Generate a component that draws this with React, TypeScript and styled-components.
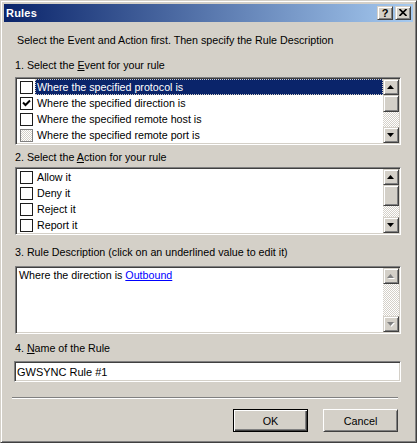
import React from 'react';
import styled, { createGlobalStyle, css } from 'styled-components';

const GlobalStyle = createGlobalStyle`
  html, body {
    margin: 0;
    padding: 0;
    background: #d4d0c8;
  }
  * {
    box-sizing: border-box;
  }
`;

const FONT = `"Liberation Sans", Arial, sans-serif`;

// classic 3D edges
const raised = css`
  border: 1px solid;
  border-color: #d4d0c8 #404040 #404040 #d4d0c8;
  box-shadow: inset 1px 1px #fff, inset -1px -1px #808080;
  background: #d4d0c8;
`;

const sunken = css`
  border: 1px solid;
  border-color: #808080 #fff #fff #808080;
  box-shadow: inset 1px 1px #404040, inset -1px -1px #d4d0c8;
  background: #fff;
`;

const checker = css`
  background-color: #fff;
  background-image: conic-gradient(#d4d0c8 25%, #fff 0 50%, #d4d0c8 0 75%, #fff 0);
  background-size: 2px 2px;
`;

const Window = styled.div`
  width: 417px;
  height: 443px;
  display: flex;
  flex-direction: column;
  padding: 3px;
  background: #d4d0c8;
  border: 1px solid;
  border-color: #d4d0c8 #404040 #404040 #d4d0c8;
  box-shadow: inset 1px 1px #fff, inset -1px -1px #808080;
  font-family: ${FONT};
  font-size: 10.7px;
  color: #000;
`;

const TitleBar = styled.div`
  height: 18px;
  display: flex;
  align-items: center;
  padding: 0 2px 0 2px;
  background: linear-gradient(to right, #0a246a, #a6caf0);
`;

const TitleText = styled.span`
  color: #fff;
  font-weight: bold;
  font-size: 11px;
  letter-spacing: 0.2px;
`;

const TitleButtons = styled.div`
  margin-left: auto;
  display: flex;
  gap: 2px;
`;

const TitleButton = styled.div`
  ${raised};
  width: 16px;
  height: 14px;
  display: flex;
  align-items: center;
  justify-content: center;
  font-weight: bold;
  font-size: 11px;
  line-height: 12px;
  padding-bottom: 1px;
`;

const Body = styled.div`
  flex: 1;
  display: flex;
  flex-direction: column;
  padding: 0 12px 0 11px;
`;

const Caption = styled.div<{ $top: number; $indent?: number }>`
  margin-top: ${(p) => p.$top}px;
  padding-left: ${(p) => p.$indent ?? 0}px;
  height: 13px;
  line-height: 13px;
  white-space: nowrap;
`;

const ListBox = styled.div<{ $top: number }>`
  ${sunken};
  margin-top: ${(p) => p.$top}px;
  height: 68px;
  padding: 1px;
  display: flex;
  overflow: hidden;
`;

const Rows = styled.div`
  flex: 1;
  overflow: hidden;
`;

const Row = styled.div`
  height: 16px;
  display: flex;
  align-items: center;
`;

const CheckBox = styled.div<{ $dim?: boolean }>`
  width: 13px;
  height: 13px;
  margin-left: 3px;
  display: flex;
  align-items: center;
  justify-content: center;
  border: 1px solid ${(p) => (p.$dim ? '#808080' : '#1c1c1c')};
  ${(p) => (p.$dim ? checker : 'background: #fff;')}
`;

const RowLabel = styled.span<{ $selected?: boolean }>`
  flex: 1;
  height: 16px;
  line-height: 16px;
  margin-left: 2px;
  padding-left: 2px;
  white-space: nowrap;
  ${(p) =>
    p.$selected &&
    css`
      background: #0a246a;
      color: #fff;
      outline: 1px dotted #d4d0c8;
      outline-offset: -1px;
    `}
`;

const DescText = styled.div`
  flex: 1;
  padding: 1px 0 0 2px;
  line-height: 13px;
  white-space: nowrap;
`;

const Link = styled.span`
  color: #0000ff;
  text-decoration: underline;
`;

const ScrollBar = styled.div`
  ${checker};
  width: 16px;
  display: flex;
  flex-direction: column;
`;

const ScrollButton = styled.div`
  ${raised};
  width: 16px;
  height: 16px;
  display: flex;
  align-items: center;
  justify-content: center;
`;

const Thumb = styled.div<{ $size: number }>`
  ${raised};
  width: 16px;
  height: ${(p) => p.$size}px;
`;

const Track = styled.div`
  flex: 1;
`;

const NameInput = styled.input`
  ${sunken};
  margin-top: 6px;
  margin-left: -1px;
  height: 21px;
  padding: 0 2px;
  font-family: ${FONT};
  font-size: 11px;
  color: #000;
  outline: none;
`;

const Separator = styled.div`
  margin: 15px 3px 0 -3px;
  height: 2px;
  border-top: 1px solid #808080;
  border-bottom: 1px solid #fff;
`;

const ButtonRow = styled.div`
  display: flex;
  justify-content: flex-end;
  gap: 15px;
  margin-top: 10px;
  padding-right: 3px;
`;

const PushButton = styled.button<{ $default?: boolean }>`
  width: 75px;
  height: 23px;
  padding: 0;
  background: #d4d0c8;
  font-family: ${FONT};
  font-size: 10.8px;
  color: #000;
  border: 1px solid;
  ${(p) =>
    p.$default
      ? css`
          border-color: #000;
          box-shadow: inset 1px 1px #fff, inset -1px -1px #404040, inset -2px -2px #808080;
        `
      : css`
          border-color: #fff #404040 #404040 #fff;
          box-shadow: inset 1px 1px #d4d0c8, inset -1px -1px #808080;
        `}
`;

const Arrow: React.FC<{ down?: boolean; disabled?: boolean }> = ({ down, disabled }) => {
  const pts = down ? '0,0 7,0 3.5,4' : '0,4 7,4 3.5,0';
  return (
    <svg width="8" height="5" viewBox="0 0 8 5">
      {disabled && <polygon points={pts} fill="#fff" transform="translate(1,1)" />}
      <polygon points={pts} fill={disabled ? '#808080' : '#000'} />
    </svg>
  );
};

const CheckMark = () => (
  <svg width="9" height="9" viewBox="0 0 9 9">
    <path d="M1 3.5 L3.5 6 L8 1.5" stroke="#000" strokeWidth="2" fill="none" />
  </svg>
);

const Scroll: React.FC<{ thumb?: number; disabled?: boolean }> = ({ thumb, disabled }) => (
  <ScrollBar>
    <ScrollButton>
      <Arrow disabled={disabled} />
    </ScrollButton>
    {thumb ? <Thumb $size={thumb} /> : null}
    <Track />
    <ScrollButton>
      <Arrow down disabled={disabled} />
    </ScrollButton>
  </ScrollBar>
);

const events = [
  { label: 'Where the specified protocol is', checked: false, selected: true },
  { label: 'Where the specified direction is', checked: true },
  { label: 'Where the specified remote host is', checked: false },
  { label: 'Where the specified remote port is', checked: false, dim: true },
];

const actions = ['Allow it', 'Deny it', 'Reject it', 'Report it'];

const App: React.FC = () => {
  return (
    <>
      <GlobalStyle />
      <Window>
        <TitleBar>
          <TitleText>Rules</TitleText>
          <TitleButtons>
            <TitleButton>?</TitleButton>
            <TitleButton>
              <svg width="8" height="7" viewBox="0 0 8 7">
                <path d="M0.5 0 L7.5 7 M7.5 0 L0.5 7" stroke="#000" strokeWidth="1.6" />
              </svg>
            </TitleButton>
          </TitleButtons>
        </TitleBar>

        <Body>
          <Caption $top={12} $indent={2}>
            Select the Event and Action first. Then specify the Rule Description
          </Caption>

          <Caption $top={12}>
            1. Select the <u>E</u>vent for your rule
          </Caption>
          <ListBox $top={5}>
            <Rows>
              {events.map((e) => (
                <Row key={e.label}>
                  <CheckBox $dim={e.dim}>{e.checked && <CheckMark />}</CheckBox>
                  <RowLabel $selected={e.selected}>{e.label}</RowLabel>
                </Row>
              ))}
            </Rows>
            <Scroll thumb={17} />
          </ListBox>

          <Caption $top={6}>
            2. Select the <u>A</u>ction for your rule
          </Caption>
          <ListBox $top={3}>
            <Rows>
              {actions.map((a) => (
                <Row key={a}>
                  <CheckBox />
                  <RowLabel>{a}</RowLabel>
                </Row>
              ))}
            </Rows>
            <Scroll thumb={21} />
          </ListBox>

          <Caption $top={11}>3. Rule Description (click on an underlined value to edit it)</Caption>
          <ListBox $top={7}>
            <DescText>
              Where the direction is <Link>Outbound</Link>
            </DescText>
            <Scroll disabled />
          </ListBox>

          <Caption $top={8}>
            4. <u>N</u>ame of the Rule
          </Caption>
          <NameInput defaultValue="GWSYNC Rule #1" />

          <Separator />

          <ButtonRow>
            <PushButton $default>OK</PushButton>
            <PushButton>Cancel</PushButton>
          </ButtonRow>
        </Body>
      </Window>
    </>
  );
};

export default App;
